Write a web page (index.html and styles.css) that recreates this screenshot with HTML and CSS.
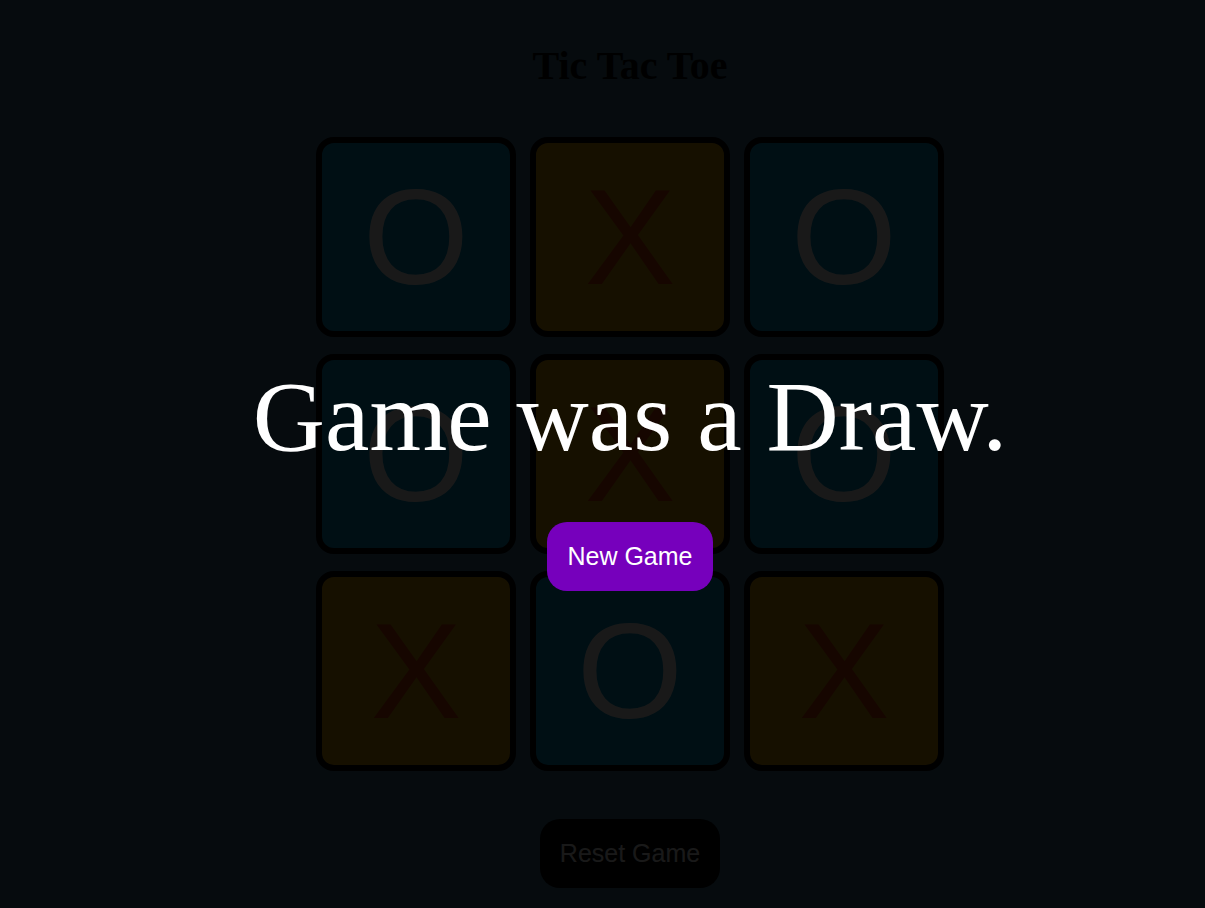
FILE: index.html
```html
<!DOCTYPE html>
<html lang="en">
<head>
<meta charset="utf-8">
<title>Tic Tac Toe</title>
<link rel="stylesheet" href="styles.css">
</head>
<body>
<div class="app">
  <h1 class="title">Tic Tac Toe</h1>
  <div class="board">
    <button class="cell cell-o">O</button>
    <button class="cell cell-x">X</button>
    <button class="cell cell-o">O</button>
    <button class="cell cell-o">O</button>
    <button class="cell cell-x">X</button>
    <button class="cell cell-o">O</button>
    <button class="cell cell-x">X</button>
    <button class="cell cell-o">O</button>
    <button class="cell cell-x">X</button>
  </div>
  <button class="reset-btn">Reset Game</button>

  <div class="overlay">
    <p class="message">Game was a Draw.</p>
    <button class="new-btn">New Game</button>
  </div>
</div>
</body>
</html>
```

FILE: styles.css
```css
html, body {
  margin: 0;
  padding: 0;
  overflow: hidden;
}

body {
  background: #3c6e8c;
}

.app {
  position: relative;
  width: 1260px;
  height: 908px;
  display: flex;
  flex-direction: column;
  align-items: center;
  background: #3c6e8c;
}

.title {
  margin: 44px 0 0;
  font-family: "Liberation Serif", "Times New Roman", serif;
  font-weight: bold;
  font-size: 40px;
  line-height: 44px;
  color: #000;
}

.board {
  margin-top: 49px;
  display: grid;
  grid-template-columns: repeat(3, 200px);
  grid-template-rows: repeat(3, 200px);
  column-gap: 14px;
  row-gap: 17px;
}

.cell {
  box-sizing: border-box;
  width: 200px;
  height: 200px;
  border: 6px solid #000;
  border-radius: 18px;
  padding: 0;
  display: flex;
  align-items: center;
  justify-content: center;
  font-family: "Liberation Sans", Arial, sans-serif;
  font-size: 136px;
  line-height: 1;
  cursor: pointer;
}

.cell-o {
  background: #0096c8;
  color: #ffffff;
}

.cell-x {
  background: #dca000;
  color: #dc3c00;
}

.reset-btn {
  margin-top: 48px;
  padding: 20px;
  border: none;
  border-radius: 20px;
  background: #000;
  color: #fff;
  font-family: "Liberation Sans", Arial, sans-serif;
  font-size: 25px;
  line-height: 28.75px;
  cursor: pointer;
}

.overlay {
  position: absolute;
  inset: 0;
  background: rgba(0, 0, 0, 0.9);
  display: flex;
  flex-direction: column;
  align-items: center;
  padding-top: 367px;
  box-sizing: border-box;
}

.message {
  margin: 0;
  font-family: "Liberation Serif", "Times New Roman", serif;
  font-size: 100px;
  line-height: 100px;
  color: #fff;
  white-space: nowrap;
}

.new-btn {
  margin-top: 55px;
  padding: 20px;
  border: none;
  border-radius: 20px;
  background: #7600bc;
  color: #fff;
  font-family: "Liberation Sans", Arial, sans-serif;
  font-size: 25px;
  line-height: 28.75px;
  cursor: pointer;
}
```
